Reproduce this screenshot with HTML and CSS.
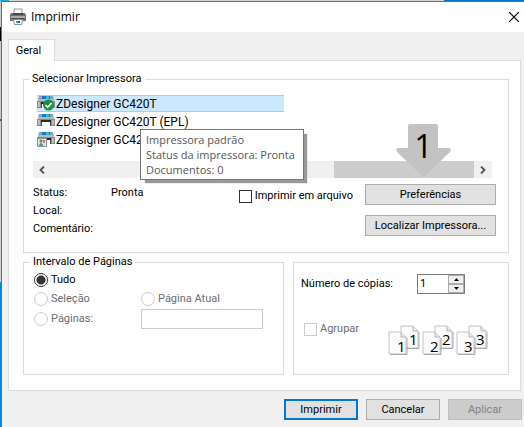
FILE: index.html
```html
<!DOCTYPE html>
<html lang="pt-BR">
<head>
<meta charset="utf-8">
<title>Imprimir</title>
<meta name="viewport" content="width=device-width, initial-scale=1">
<link rel="stylesheet" href="styles.css">
</head>
<body>
<svg class="defs" aria-hidden="true">
  <symbol id="printer" viewBox="0 0 18 14">
    <path d="M2 0h14l1 4H1z" fill="#8fa3ad"/>
    <path d="M5 0h8v4H5z" fill="#1378c8"/>
    <path d="M9 0h3v3H9z" fill="#35b8e8"/>
    <path d="M1 3h16v2H1z" fill="#b4bcc0"/>
    <path d="M0 5h18v7H0z" fill="#858b8e"/>
    <path d="M1 6h2v5H1zM15 6h2v5h-2z" fill="#b9bdc0"/>
    <path d="M4 6h10v2H4z" fill="#24282b"/>
    <path d="M5 8h8v5H5z" fill="#fff"/>
    <path d="M4 8h1v4H4zM13 8h1v4h-1z" fill="#4b5053"/>
  </symbol>
  <symbol id="sheet" viewBox="0 0 20 24">
    <path d="M1 1h12l5 5v17H1z" fill="#fbfbfb" stroke="#c4c4c4"/>
    <path d="M13 1v5h5" fill="#e8e8e8" stroke="#b5b5b5"/>
    <path d="M2 23.500h17V7" fill="none" stroke="#a8a8a8"/>
  </symbol>
</svg>
<div class="behind"><span>Etiqueta - Emparamento</span></div>
<main class="dialog">
  <header class="titlebar">
    <svg class="app-icon" viewBox="0 0 16 16" aria-hidden="true">
      <path d="M4 0h8v5H4z" fill="#f5f5f5" stroke="#9a9a9a"/>
      <path d="M1 4h14l1 2v6H0V6z" fill="#6f7274"/>
      <path d="M3 4h10v2H3z" fill="#45494c"/>
      <path d="M1 7h14v2H1z" fill="#a9abad"/>
      <path d="M2 9h12v1H2z" fill="#44484b"/>
      <path d="M3.500 10.500h9l-1 5h-7z" fill="#fff" stroke="#8d8f91"/>
      <path d="M6 12h2v2H6z" fill="#2aa7b8"/><path d="M8 12h2v2H8z" fill="#1c5fb0"/>
    </svg>
    <h1>Imprimir</h1>
    <button class="close" type="button" aria-label="Fechar">
      <svg viewBox="0 0 10 10"><path d="M0 0l10 10M10 0L0 10" stroke="#000" stroke-width="1.200"/></svg>
    </button>
  </header>

  <form class="content">
    <div class="tabs" role="tablist"><button class="tab" type="button" role="tab" aria-selected="true">Geral</button></div>
    <div class="panel" role="tabpanel">
      <fieldset class="group printers">
        <legend>Selecionar Impressora</legend>
        <ul class="list" role="listbox" aria-label="Impressoras">
          <li class="selected" role="option" aria-selected="true">
            <svg class="printer" viewBox="0 0 18 15"><use href="#printer" width="18" height="14"/><circle cx="11.500" cy="9" r="5.500" fill="#12923a"/><path d="M8.500 9l2.200 2.200 3.800-4" fill="none" stroke="#fff" stroke-width="1.700"/></svg>
            <span>ZDesigner GC420T</span>
          </li>
          <li role="option">
            <svg class="printer" viewBox="0 0 18 15"><use href="#printer" width="18" height="14"/></svg>
            <span>ZDesigner GC420T (EPL)</span>
          </li>
          <li role="option">
            <svg class="printer" viewBox="0 0 18 15"><use href="#printer" width="18" height="14"/><path d="M.5 6.500h9v8h-9z" fill="#dfe5e6" stroke="#8c9698"/><circle cx="4" cy="9" r="1.500" fill="#64836f"/><path d="M2 14c0-4 4-4 4 0z" fill="#4f8fae"/><path d="M6 8h2v3H6z" fill="#b2837b"/></svg>
            <span>ZDesigner GC42</span>
          </li>
        </ul>
        <div class="scrollbar">
          <button type="button" aria-label="Rolar para a esquerda"><svg viewBox="0 0 8 8"><path d="M6 .5L2.500 4 6 7.500" fill="none" stroke="#505050" stroke-width="1.800"/></svg></button>
          <div class="track"><div class="thumb"></div></div>
          <button type="button" aria-label="Rolar para a direita"><svg viewBox="0 0 8 8"><path d="M2 .5L5.500 4 2 7.500" fill="none" stroke="#505050" stroke-width="1.800"/></svg></button>
        </div>
        <div class="tooltip" role="tooltip">Impressora padrão<br>Status da impressora: Pronta<br>Documentos: 0</div>
        <div class="marker">
          <svg viewBox="0 0 55 53" aria-hidden="true"><path d="M14 0h26q2 0 2 2v22h11q3 1 1 4L30 51q-2.500 3-5 0L1 28q-2-3 1-4h10V2q0-2 2-2z" fill="#c3c3c3"/></svg>
          <span>1</span>
        </div>
        <div class="details">
          <dl>
            <dt>Status:</dt><dd>Pronta</dd>
            <dt>Local:</dt><dd></dd>
            <dt>Comentário:</dt><dd></dd>
          </dl>
          <label class="choice to-file"><input type="checkbox">Imprimir em arquivo</label>
          <div class="actions">
            <button class="button" type="button">Preferências</button>
            <button class="button" type="button">Localizar Impressora...</button>
          </div>
        </div>
      </fieldset>

      <div class="columns">
        <fieldset class="group">
          <legend>Intervalo de Páginas</legend>
          <div class="ranges">
            <label class="choice all"><input type="radio" name="range" checked>Tudo</label>
            <label class="choice"><input type="radio" name="range" disabled>Seleção</label>
            <label class="choice"><input type="radio" name="range" disabled>Página Atual</label>
            <label class="choice"><input type="radio" name="range" disabled>Páginas:</label>
            <input class="pages" type="text" aria-label="Páginas" disabled>
          </div>
        </fieldset>
        <fieldset class="group copies">
          <div class="copy-row">
            <label for="copies">Número de cópias:</label>
            <div class="spinner">
              <input id="copies" type="text" inputmode="numeric" value="1">
              <div class="steps">
                <button type="button" aria-label="Aumentar"><svg viewBox="0 0 5 3"><path d="M0 3L2.500 0 5 3z"/></svg></button>
                <button type="button" aria-label="Diminuir"><svg viewBox="0 0 5 3"><path d="M0 0l2.500 3L5 0z"/></svg></button>
              </div>
            </div>
          </div>
          <div class="collate">
            <label class="choice"><input type="checkbox" disabled>Agrupar</label>
            <svg class="sheets" viewBox="0 0 100 31" role="img" aria-label="Cópias não agrupadas">
              <g><use href="#sheet" x="12" y="0" width="20" height="24"/><use href="#sheet" x="0" y="6" width="20" height="24"/><text x="21" y="20">1</text><text x="9" y="27">1</text></g>
              <g><use href="#sheet" x="46" y="0" width="20" height="24"/><use href="#sheet" x="34" y="6" width="20" height="24"/><text x="54" y="20">2</text><text x="42" y="27">2</text></g>
              <g><use href="#sheet" x="80" y="0" width="20" height="24"/><use href="#sheet" x="68" y="6" width="20" height="24"/><text x="88" y="20">3</text><text x="76" y="27">3</text></g>
            </svg>
          </div>
        </fieldset>
      </div>
    </div>
    <footer>
      <button class="button primary" type="button">Imprimir</button>
      <button class="button" type="button">Cancelar</button>
      <button class="button" type="button" disabled>Aplicar</button>
    </footer>
  </form>
</main>
</body>
</html>
```
FILE: styles.css
```css
* { box-sizing: border-box; }

body {
  margin: 0;
  min-height: 100vh;
  display: flex;
  flex-direction: column;
  padding-left: 1px;
  font: 11px/14px Roboto, "Open Sans", sans-serif;
  color: #000;
  background: linear-gradient(#c8c8c8 27px, #000 27px 41px, #c8c8c8 41px 119px, #555 119px 121px, #d0d0d0 121px 282px, #0a86cc 282px);
}

button, input { font: inherit; color: inherit; }
button { padding: 0; }
.defs { position: absolute; width: 0; height: 0; }

.behind {
  height: 1px;
  margin-left: -1px;
  padding-left: 16px;
  overflow: hidden;
  display: flex;
  align-items: flex-end;
  color: #555;
  background: linear-gradient(90deg, #2c9fe0 9px, #d6d6d2 9px 444px, #0070d0 444px);
}

.dialog {
  flex: 1;
  display: flex;
  flex-direction: column;
  border: solid #6e6e6e;
  border-width: 1px 0 0 1px;
  background: #f0f0f0;
}

.titlebar {
  height: 30px;
  display: flex;
  align-items: center;
  gap: 5px;
  padding: 0 5px 0 8px;
  background: #fff;
}
.titlebar h1 { flex: 1; margin: 0; font: 12px/16px "Open Sans", sans-serif; }
.app-icon { width: 16px; height: 16px; overflow: visible; }
.close { display: flex; border: 0; background: none; }
.close svg { width: 10px; height: 10px; }

.content { padding: 7px 3px 0 6px; }
.tabs { display: flex; }
.tab {
  width: 47px;
  height: 22px;
  margin-bottom: -1px;
  padding-right: 6px;
  border: 1px solid #dcdcdc;
  border-bottom: 0;
  background: #fff;
  position: relative;
}
.panel {
  padding: 11px 11px 15px 14px;
  border: 1px solid #dcdcdc;
  background: #fff;
}

.group {
  min-width: 0;
  margin: 0;
  padding: 0 10px;
  border: 1px solid #dcdcdc;
}
.group legend { margin-left: -4px; padding: 0 3px; }

.printers { position: relative; padding: 9px 12px 14px 9px; }
.list {
  margin: 0 0 13px 4px;
  padding: 0;
  width: 247px;
  list-style: none;
  display: grid;
  gap: 1px;
  font-size: 12px;
}
.list li { height: 17px; display: flex; align-items: center; gap: 1px; }
.list .selected { background: #cce8ff; box-shadow: inset 0 1px #99d1ff, inset 0 -1px #99d1ff; }
.printer { width: 18px; height: 15px; }

.scrollbar { height: 17px; margin-right: 4px; display: flex; background: #f0f0f0; }
.scrollbar button {
  width: 18px;
  display: flex;
  align-items: center;
  justify-content: center;
  border: 0;
  background: none;
}
.scrollbar svg { width: 8px; height: 8px; }
.track { flex: 1; display: flex; justify-content: flex-end; }
.thumb { width: 33%; background: #cdcdcd; }

.tooltip {
  position: absolute;
  left: 116px;
  top: 43px;
  padding: 2px 8px 2px 5px;
  border: 1px solid #767676;
  background: #fff;
  box-shadow: 4px 4px 1px -1px #999;
  color: #575757;
  font: 11px/15px "Open Sans", sans-serif;
  white-space: nowrap;
}
.marker {
  position: absolute;
  right: 57px;
  top: 38px;
  display: grid;
}
.marker > * { grid-area: 1 / 1; }
.marker svg { width: 55px; height: 53px; }
.marker span { font: 32px/44px "Open Sans", sans-serif; text-align: center; }

.details { display: flex; margin-top: 6px; }
dl {
  flex: 1;
  margin: 0;
  display: grid;
  grid-template-columns: 78px 1fr;
  grid-auto-rows: 18px;
  align-items: center;
}
dd { margin: 0; }
.actions { width: 131px; display: grid; gap: 10px; align-content: start; }
.to-file { height: 24px; margin-right: 12px; }

.button {
  height: 21px;
  border: 1px solid #adadad;
  background: #e1e1e1;
}
.button.primary { border: 2px solid #0078d7; }
.button:disabled { border-color: #bfbfbf; background: #ccc; color: #838383; }

.choice { display: flex; align-items: center; gap: 3px; }
.choice:has(:disabled) { color: #6d6d6d; }
.choice input {
  appearance: none;
  width: 13px;
  height: 13px;
  margin: 0;
  border: 1px solid #333;
  background: #fff;
}
.choice input:disabled { border-color: #ccc; }
.choice [type="radio"] { width: 14px; height: 14px; border-radius: 50%; }
.choice [type="radio"]:checked { background: radial-gradient(#333 4px, #fff 5px); }

.columns { display: grid; grid-template-columns: 261fr 216fr; gap: 9px; margin-top: 2px; }
.ranges {
  height: 105px;
  padding-top: 2px;
  display: grid;
  grid-template-columns: 107px 1fr;
  grid-template-rows: 18px 18px 20px;
  row-gap: 1px;
}
.all { grid-column: 1 / -1; }
.pages { width: 122px; border: 1px solid #ccc; background: #fff; }

.copies { margin-top: 7px; padding: 11px 20px 0 7px; }
.copy-row { display: flex; align-items: center; justify-content: space-between; padding-right: 23px; }
.spinner { display: flex; width: 48px; height: 20px; border: 1px solid #7a7a7a; }
.spinner input { flex: 1; min-width: 0; padding: 0 2px; border: 0; background: none; }
.steps { width: 16px; display: grid; grid-template-rows: 1fr 1fr; }
.steps button {
  display: flex;
  align-items: center;
  justify-content: center;
  border: 1px solid #acacac;
  background: #f0f0f0;
}
.steps svg { width: 5px; height: 3px; }
.collate { display: flex; justify-content: space-between; margin-top: 31px; padding-left: 3px; }
.collate .choice { height: 8px; }
.sheets { width: 100px; height: 31px; }
.sheets text { font: 15px "Open Sans", sans-serif; }

footer { display: flex; justify-content: flex-end; gap: 8px; padding: 8px 0; margin-right: -1px; }
footer .button { width: 74px; }
```
